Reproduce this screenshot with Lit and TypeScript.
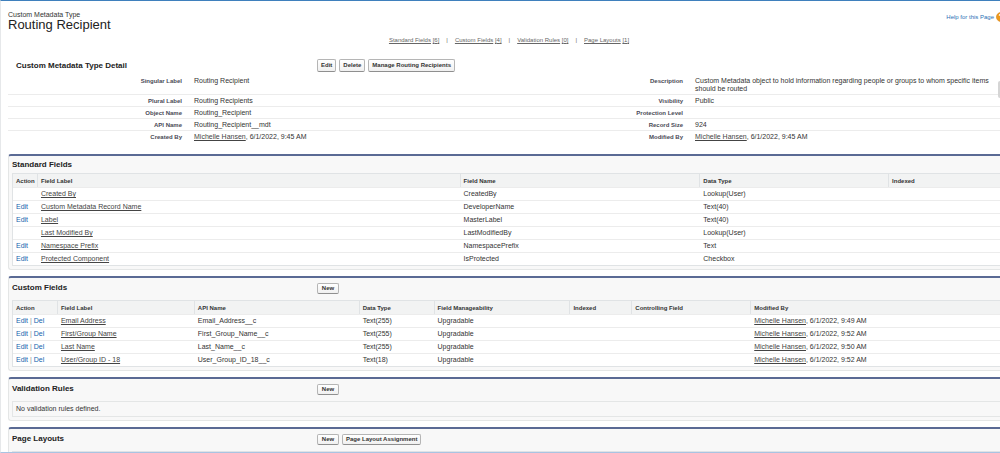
import { LitElement, html, css, nothing, TemplateResult } from "lit";
import { customElement, property } from "lit/decorators.js";

type Cell = string | TemplateResult;

interface Column {
  label: string;
  /** Relative share of the table's width. */
  share: number;
}

const link = (text: string) => html`<a href="#">${text}</a>`;
const stamp = (time: string) => html`${link("Michelle Hansen")}, 6/1/2022, ${time}`;
const action = (text: string) => html`<a class="action" href="#">${text}</a>`;
const editDel = () => html`<span class="actions">${action("Edit")} | ${action("Del")}</span>`;

const tokens = css`
  :host {
    display: block;
    font-family: "Liberation Sans", Arial, sans-serif;
    font-size: 7px;
    line-height: 8px;
    color: #333;
  }
  * {
    box-sizing: border-box;
  }
  a {
    color: #444;
    text-decoration: underline;
  }
  h1,
  h2,
  p {
    margin: 0;
  }
  h2 {
    font-size: 8px;
    line-height: 10px;
    color: #222;
  }
  table {
    width: 100%;
    border-collapse: separate;
    border-spacing: 0;
    table-layout: fixed;
  }
  button {
    height: 13px;
    padding: 0 3px;
    border: 1px solid #b5b5b5;
    border-bottom-color: #8f8f8f;
    border-radius: 2px;
    background: linear-gradient(#fff, #f0f0f0);
    color: #333;
    font: bold 6px/9px "Liberation Sans", Arial, sans-serif;
    white-space: nowrap;
  }
  .buttons {
    display: flex;
    gap: 3px;
  }
`;

@customElement("related-list")
export class RelatedList extends LitElement {
  static styles = [
    tokens,
    css`
      .card {
        border: 1px solid #e4e6e6;
        border-top: 2px solid #5a6a94;
        border-right: 0;
        border-radius: 3px 0 0 3px;
        background: #f8f8f8;
        padding: 0 0 3px 3px;
      }
      header {
        display: grid;
        grid-template-columns: 305px 1fr;
        align-items: center;
        height: 17px;
      }
      .tall {
        height: 22px;
        padding-bottom: 2px;
      }
      .tall button {
        height: 11px;
        min-width: 22px;
      }
      table {
        border: 1px solid #e0e3e5;
        border-right: 0;
        background: #fff;
      }
      th {
        height: 13px;
        padding: 0 0 0 3px;
        background: #f2f3f3;
        border-right: 1px solid #e0e3e5;
        font-size: 6px;
        text-align: left;
        white-space: nowrap;
      }
      th:last-child {
        border-right: 0;
      }
      td {
        height: 13px;
        padding: 0 0 0 3px;
        border-top: 1px solid #ececec;
        white-space: nowrap;
      }
      .action {
        color: #1563ad;
        text-decoration: none;
      }
      .actions {
        color: #7a8a99;
      }
      .empty {
        border: 1px solid #e4e6e6;
        border-right: 0;
        padding: 3px;
      }
    `,
  ];

  @property() heading = "";
  @property({ attribute: false }) buttons: string[] = [];
  @property({ attribute: false }) columns: Column[] = [];
  @property({ attribute: false }) rows: Cell[][] = [];
  @property() empty = "";

  render() {
    const total = this.columns.reduce((sum, c) => sum + c.share, 0);
    return html`
      <section class="card">
        <header class=${this.buttons.length ? "tall" : ""}>
          <h2>${this.heading}</h2>
          <div class="buttons">
            ${this.buttons.map((b) => html`<button type="button">${b}</button>`)}
          </div>
        </header>
        ${this.empty ? html`<p class="empty">${this.empty}</p>` : nothing}
        ${this.columns.length
          ? html`<table>
              <colgroup>
                ${this.columns.map(
                  (c) => html`<col style="width:${(c.share / total) * 100}%" />`
                )}
              </colgroup>
              <thead>
                <tr>
                  ${this.columns.map((c) => html`<th scope="col">${c.label}</th>`)}
                </tr>
              </thead>
              <tbody>
                ${this.rows.map(
                  (r) => html`<tr>
                    ${r.map((cell) => html`<td>${cell}</td>`)}
                  </tr>`
                )}
              </tbody>
            </table>`
          : nothing}
      </section>
    `;
  }
}

const standardColumns: Column[] = [
  { label: "Action", share: 25 },
  { label: "Field Label", share: 423 },
  { label: "Field Name", share: 240 },
  { label: "Data Type", share: 189 },
  { label: "Indexed", share: 111 },
];

const standardRows: Cell[][] = [
  ["", link("Created By"), "CreatedBy", "Lookup(User)", ""],
  [action("Edit"), link("Custom Metadata Record Name"), "DeveloperName", "Text(40)", ""],
  [action("Edit"), link("Label"), "MasterLabel", "Text(40)", ""],
  ["", link("Last Modified By"), "LastModifiedBy", "Lookup(User)", ""],
  [action("Edit"), link("Namespace Prefix"), "NamespacePrefix", "Text", ""],
  [action("Edit"), link("Protected Component"), "IsProtected", "Checkbox", ""],
];

const customColumns: Column[] = [
  { label: "Action", share: 45 },
  { label: "Field Label", share: 137 },
  { label: "API Name", share: 165 },
  { label: "Data Type", share: 75 },
  { label: "Field Manageability", share: 136 },
  { label: "Indexed", share: 62 },
  { label: "Controlling Field", share: 119 },
  { label: "Modified By", share: 249 },
];

const customRows: Cell[][] = [
  ["Email Address", "Email_Address__c", "Text(255)", "9:49 AM"],
  ["First/Group Name", "First_Group_Name__c", "Text(255)", "9:52 AM"],
  ["Last Name", "Last_Name__c", "Text(255)", "9:50 AM"],
  ["User/Group ID - 18", "User_Group_ID_18__c", "Text(18)", "9:52 AM"],
].map(([label, api, type, time]) => [
  editDel(),
  link(label),
  api,
  type,
  "Upgradable",
  "",
  "",
  stamp(time),
]);

const layoutColumns: Column[] = [
  { label: "", share: 45 },
  { label: "", share: 248 },
  { label: "", share: 695 },
];

const details: [string, Cell, string, Cell][] = [
  [
    "Singular Label",
    "Routing Recipient",
    "Description",
    "Custom Metadata object to hold information regarding people or groups to whom specific items should be routed",
  ],
  ["Plural Label", "Routing Recipients", "Visibility", "Public"],
  ["Object Name", "Routing_Recipient", "Protection Level", ""],
  ["API Name", "Routing_Recipient__mdt", "Record Size", "924"],
  ["Created By", stamp("9:45 AM"), "Modified By", stamp("9:45 AM")],
];

const jumps: [string, number][] = [
  ["Standard Fields", 6],
  ["Custom Fields", 4],
  ["Validation Rules", 0],
  ["Page Layouts", 1],
];

@customElement("app-root")
export class AppRoot extends LitElement {
  static styles = [
    tokens,
    css`
      .page {
        height: 100vh;
        border-top: 1px solid #3f80bd;
        border-left: 1px solid #e6e8ea;
        border-bottom: 1px solid #a9c3e2;
        background: #fff;
        overflow: hidden;
      }
      .top {
        display: flex;
        justify-content: space-between;
        padding: 10px 0 0 7px;
      }
      h1 {
        font-size: 13px;
        font-weight: normal;
        line-height: 12px;
        color: #222;
      }
      .help {
        display: flex;
        align-items: center;
        gap: 2px;
        height: 12px;
        margin-right: -6px;
        font-size: 6px;
        text-decoration: none;
        color: #2a6fb5;
      }
      .help svg {
        width: 10px;
        height: 10px;
      }
      .jumps {
        display: flex;
        justify-content: center;
        gap: 7px;
        margin-top: 5px;
        padding-left: 17px;
        font-size: 6px;
        color: #666;
      }
      .jumps a {
        color: #666;
      }
      .detail-head {
        display: grid;
        grid-template-columns: 301px 1fr;
        align-items: center;
        margin: 15px 0 3px;
        padding-left: 15px;
      }
      .detail {
        margin: 0 0 11px 7px;
      }
      .detail-wrap {
        position: relative;
      }
      .handle {
        position: absolute;
        right: 0;
        top: 6px;
        width: 2px;
        height: 17px;
        background: #d5d5d5;
        border-radius: 2px 0 0 2px;
      }
      .label {
        width: 178px;
      }
      .last {
        width: 313px;
      }
      th,
      td {
        padding: 2px 8px 1px;
        height: 12px;
        vertical-align: top;
        border-bottom: 1px solid #ececec;
      }
      th {
        padding-right: 4px;
        font-size: 6px;
        text-align: right;
        color: #4a4a56;
      }
      tr:first-child > * {
        height: 19px;
      }
      tr:last-child > * {
        border-bottom: 0;
      }
      .lists {
        display: grid;
        gap: 6px;
        padding-left: 7px;
      }
    `,
  ];

  render() {
    return html`
      <main class="page">
        <div class="top">
          <div>
            <div>Custom Metadata Type</div>
            <h1>Routing Recipient</h1>
          </div>
          <a class="help" href="#">
            Help for this Page
            <svg viewBox="0 0 10 10" aria-hidden="true">
              <circle cx="5" cy="5" r="4.6" fill="#ee9a1c" stroke="#d07c10" stroke-width=".5" />
              <path
                d="M3.3 3.8a1.7 1.5 0 1 1 2.4 1.3q-.7.3-.7 1M5 7v1"
                fill="none"
                stroke="#fff"
                stroke-width="1.1"
              />
            </svg>
          </a>
        </div>
        <nav class="jumps">
          ${jumps.map(
            ([name, count], i) => html`
              ${i ? html`<span>|</span>` : nothing}
              <span>${link(name)} <a href="#">[${count}]</a></span>
            `
          )}
        </nav>
        <div class="detail-head">
          <h2>Custom Metadata Type Detail</h2>
          <div class="buttons">
            <button type="button">Edit</button>
            <button type="button">Delete</button>
            <button type="button">Manage Routing Recipients</button>
          </div>
        </div>
        <div class="detail-wrap">
          <div class="detail">
            <table>
              <colgroup>
                <col class="label" />
                <col />
                <col class="label" />
                <col class="last" />
              </colgroup>
              <tbody>
                ${details.map(
                  ([a, b, c, d]) => html`<tr>
                    <th scope="row">${a}</th>
                    <td>${b}</td>
                    <th scope="row">${c}</th>
                    <td>${d}</td>
                  </tr>`
                )}
              </tbody>
            </table>
          </div>
          <div class="handle"></div>
        </div>
        <div class="lists">
          <related-list
            heading="Standard Fields"
            .columns=${standardColumns}
            .rows=${standardRows}
          ></related-list>
          <related-list
            heading="Custom Fields"
            .buttons=${["New"]}
            .columns=${customColumns}
            .rows=${customRows}
          ></related-list>
          <related-list
            heading="Validation Rules"
            .buttons=${["New"]}
            empty="No validation rules defined."
          ></related-list>
          <related-list
            heading="Page Layouts"
            .buttons=${["New", "Page Layout Assignment"]}
            .columns=${layoutColumns}
          ></related-list>
        </div>
      </main>
    `;
  }
}
